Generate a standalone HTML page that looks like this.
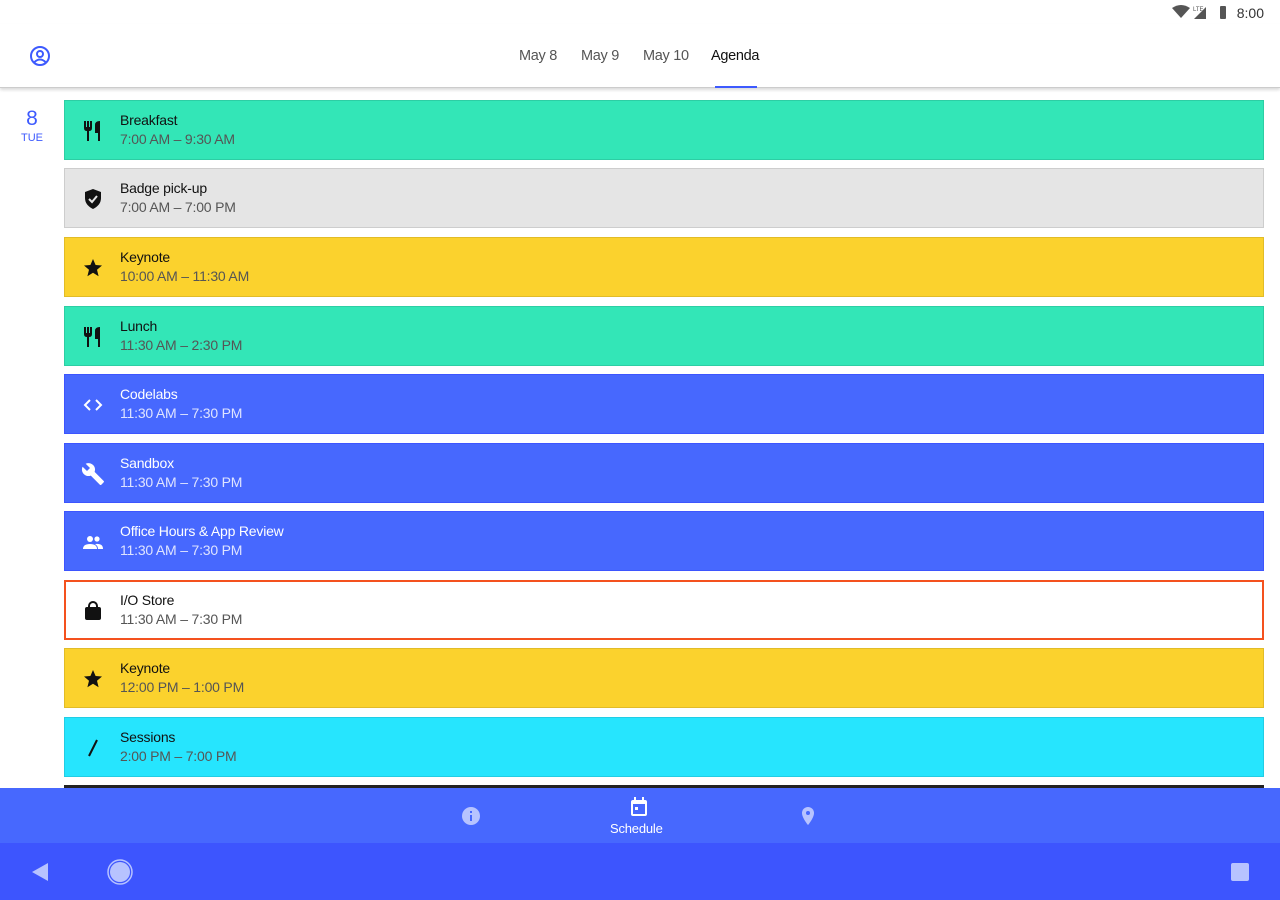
<!DOCTYPE html>
<html><head><style>
*{margin:0;padding:0;box-sizing:border-box}
body{width:1280px;height:900px;overflow:hidden;background:#fff;font-family:"Liberation Sans",sans-serif;position:relative}
.status{position:absolute;top:0;left:0;right:0;height:24px}
.time{position:absolute;right:16px;top:5px;font-size:14px;color:#333}
.top{position:absolute;top:24px;left:0;right:0;height:64px;border-bottom:1px solid #ccc;box-shadow:0 2px 3px rgba(0,0,0,.15)}
.tab{position:absolute;top:24px;font-size:14.5px;color:#555;letter-spacing:-0.3px}
.ind{position:absolute;left:715px;top:62px;width:42px;height:2px;background:#3d5afe}
.date{position:absolute;left:16px;top:107px;width:32px;text-align:center;color:#3d5afe}
.card{position:absolute;left:64px;width:1200px;height:60px;border:1px solid rgba(0,0,0,.1)}
.card .t{position:absolute;left:55px;top:11px;font-size:14px;color:#111;letter-spacing:-0.2px}
.card .s{position:absolute;left:55px;top:30px;font-size:14px;color:#555;letter-spacing:-0.2px}
.card.b .t{color:#fff}.card.b .s{color:#dfe4ff}
.card svg{position:absolute;left:16px;top:18px}
.nav{position:absolute;top:788px;left:0;right:0;height:55px;background:#4768fe}
.sys{position:absolute;top:843px;left:0;right:0;height:57px;background:#3d55fe}
</style></head><body>
<div class="status">
<svg style="position:absolute;left:1172px;top:5px" width="70" height="14"><path d="M0 3 Q9 -3 18 3 L9 13Z" fill="#555"/><text x="21" y="6" font-size="6" fill="#555" font-family="Liberation Sans">LTE</text><path d="M22 14 L34 2 L34 14Z" fill="#555"/><rect x="48" y="1" width="6" height="13" rx="1" fill="#555"/></svg>
<div class="time">8:00</div></div>
<div class="top">
<svg style="position:absolute;left:29px;top:21px" width="22" height="22" viewBox="0 0 22 22"><circle cx="11" cy="11" r="9" fill="none" stroke="#3d5afe" stroke-width="2"/><circle cx="11" cy="9" r="3" fill="none" stroke="#3d5afe" stroke-width="2"/><path d="M5.5 17 Q11 12 16.5 17" fill="none" stroke="#3d5afe" stroke-width="2"/></svg>
<div class="tab" style="left:519px">May 8</div>
<div class="tab" style="left:581px">May 9</div>
<div class="tab" style="left:643px">May 10</div>
<div class="tab" style="left:711px;color:#111">Agenda</div>
<div class="ind"></div></div>
<div class="date"><div style="font-size:21px">8</div><div style="font-size:11px;margin-top:1px">TUE</div></div>

<div class="card" style="top:100px;background:#33e6b7"><svg width="24" height="24"><path d="M3 2v7q0 3 3 3v10h2V12q3 0 3-3V2H9v6H8V2H6v6H5V2z M14 6q0-4 5-4v20h-2v-8h-3z" fill="#111"/></svg><div class="t">Breakfast</div><div class="s">7:00 AM – 9:30 AM</div></div>
<div class="card" style="top:168px;background:#e5e5e5"><svg width="24" height="24"><path d="M12 2l8 3v6q0 7-8 11q-8-4-8-11V5z" fill="#111"/><path d="M8 12l3 3 5-6" stroke="#e5e5e5" stroke-width="2" fill="none"/></svg><div class="t">Badge pick-up</div><div class="s">7:00 AM – 7:00 PM</div></div>
<div class="card" style="top:237px;background:#fbd22d"><svg width="24" height="24"><path d="M12 3l2.6 6 6.4.5-5 4.3 1.6 6.4L12 16.8 6.4 20.2 8 13.8 3 9.5 9.4 9z" fill="#111"/></svg><div class="t">Keynote</div><div class="s">10:00 AM – 11:30 AM</div></div>
<div class="card" style="top:306px;background:#33e6b7"><svg width="24" height="24"><path d="M3 2v7q0 3 3 3v10h2V12q3 0 3-3V2H9v6H8V2H6v6H5V2z M14 6q0-4 5-4v20h-2v-8h-3z" fill="#111"/></svg><div class="t">Lunch</div><div class="s">11:30 AM – 2:30 PM</div></div>
<div class="card b" style="top:374px;background:#4768fe;border-color:#3d55fe"><svg width="24" height="24"><path d="M9 7l-5 5 5 5M15 7l5 5-5 5" stroke="#fff" stroke-width="2" fill="none"/></svg><div class="t">Codelabs</div><div class="s">11:30 AM – 7:30 PM</div></div>
<div class="card b" style="top:443px;background:#4768fe;border-color:#3d55fe"><svg width="24" height="24" viewBox="0 0 24 24"><path d="M22.7 19l-9.1-9.1c.9-2.3.4-5-1.5-6.9-2-2-5-2.4-7.4-1.3L9 6 6 9 1.6 4.7C.4 7.1.9 10.1 2.9 12.1c1.9 1.9 4.6 2.4 6.9 1.5l9.1 9.1c.4.4 1 .4 1.4 0l2.3-2.3c.5-.4.5-1.1.1-1.4z" fill="#fff"/></svg><div class="t">Sandbox</div><div class="s">11:30 AM – 7:30 PM</div></div>
<div class="card b" style="top:511px;background:#4768fe;border-color:#3d55fe"><svg width="24" height="24"><circle cx="9" cy="9" r="3" fill="#fff"/><circle cx="16" cy="9" r="2.6" fill="#fff"/><path d="M2 19q0-5 7-5t7 5zM14 14q8-1 8 5h-5q0-3-3-5z" fill="#fff"/></svg><div class="t">Office Hours &amp; App Review</div><div class="s">11:30 AM – 7:30 PM</div></div>
<div class="card" style="top:580px;background:#fff;border:2px solid #f4511e"><svg width="24" height="24" style="left:15px;top:17px"><rect x="4" y="8" width="16" height="13" rx="2" fill="#111"/><path d="M8 10V7a4 4 0 0 1 8 0v3" stroke="#111" stroke-width="2" fill="none"/></svg><div class="t" style="left:54px;top:10px">I/O Store</div><div class="s" style="left:54px;top:29px">11:30 AM – 7:30 PM</div></div>
<div class="card" style="top:648px;background:#fbd22d"><svg width="24" height="24"><path d="M12 3l2.6 6 6.4.5-5 4.3 1.6 6.4L12 16.8 6.4 20.2 8 13.8 3 9.5 9.4 9z" fill="#111"/></svg><div class="t">Keynote</div><div class="s">12:00 PM – 1:00 PM</div></div>
<div class="card" style="top:717px;background:#26e5fe"><svg width="24" height="24"><path d="M16 4L8 20" stroke="#111" stroke-width="2"/></svg><div class="t">Sessions</div><div class="s">2:00 PM – 7:00 PM</div></div>
<div style="position:absolute;top:785px;left:64px;width:1200px;height:3px;background:#222"></div>

<div class="nav">
<svg style="position:absolute;left:461px;top:18px" width="20" height="20"><circle cx="10" cy="10" r="9" fill="#b7c3ff"/><rect x="9" y="9" width="2" height="6" fill="#4768fe"/><rect x="9" y="5" width="2" height="2" fill="#4768fe"/></svg>
<svg style="position:absolute;left:629px;top:9px" width="20" height="20"><rect x="2" y="3" width="16" height="16" rx="2" fill="#fff"/><rect x="4" y="7" width="12" height="10" fill="#4768fe"/><rect x="5" y="0" width="2" height="4" fill="#fff"/><rect x="13" y="0" width="2" height="4" fill="#fff"/><rect x="6" y="10" width="3" height="3" fill="#fff"/></svg>
<div style="position:absolute;left:610px;top:33px;font-size:13px;color:#fff;letter-spacing:-0.2px">Schedule</div>
<svg style="position:absolute;left:800px;top:18px" width="16" height="22"><path d="M8 1a6 6 0 0 1 6 6c0 5-6 12-6 12S2 12 2 7a6 6 0 0 1 6-6z" fill="#b7c3ff"/><circle cx="8" cy="7" r="2" fill="#4768fe"/></svg>
</div>
<div class="sys">
<svg style="position:absolute;left:31px;top:19px" width="18" height="20"><path d="M17 1v18L1 10z" fill="#b7c3ff"/></svg>
<svg style="position:absolute;left:107px;top:16px" width="26" height="26"><circle cx="13" cy="13" r="12" fill="none" stroke="#b7c3ff" stroke-width="1.5"/><circle cx="13" cy="13" r="10" fill="#b7c3ff"/></svg>
<div style="position:absolute;left:1231px;top:20px;width:18px;height:18px;background:#b7c3ff;border-radius:2px"></div>
</div>
</body></html>
